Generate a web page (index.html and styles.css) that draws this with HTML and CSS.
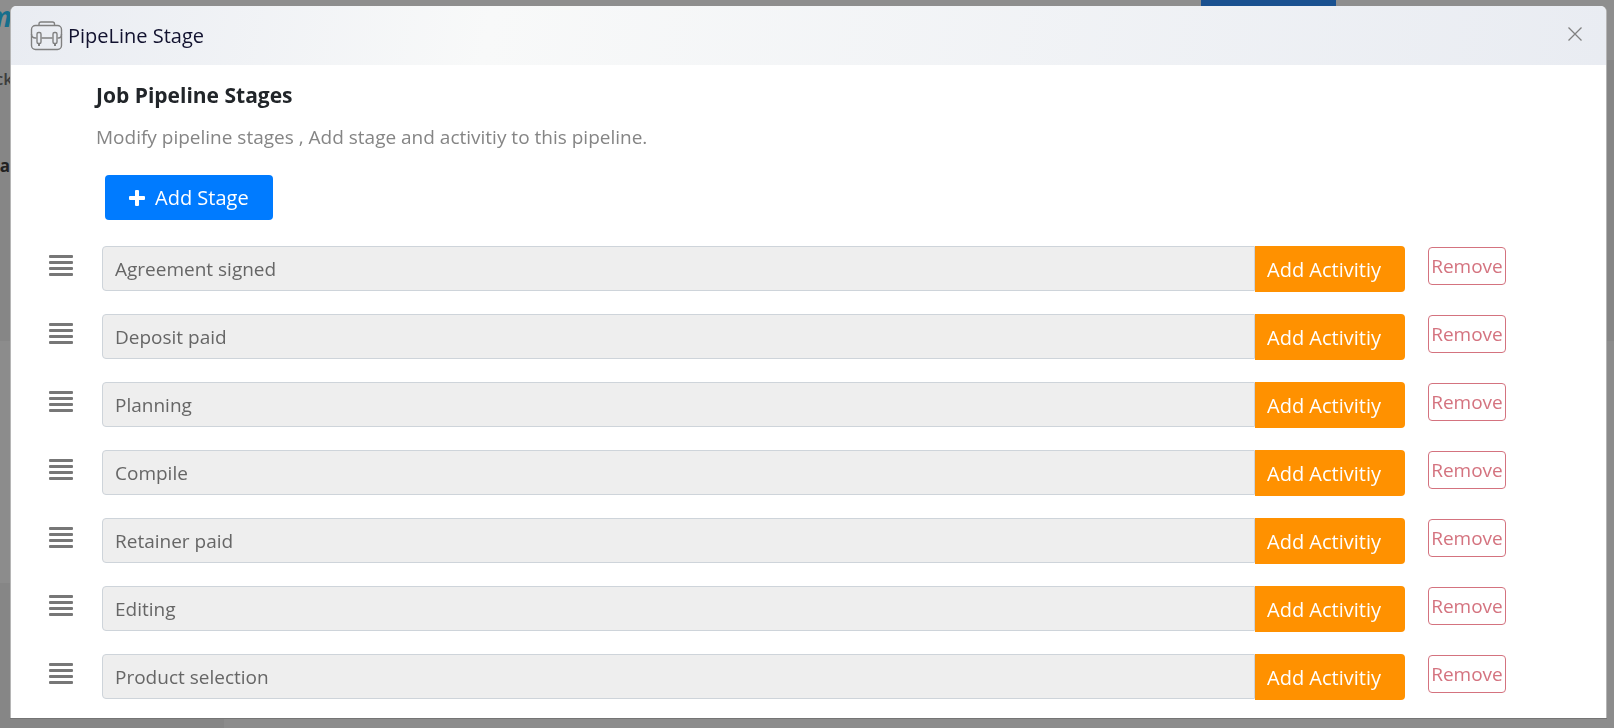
FILE: index.html
```
<!DOCTYPE html>
<html lang="en">
  <head>
    <meta charset="utf-8">
    <title>PipeLine Stage</title>
    <link rel="stylesheet" href="styles.css">
  </head>
  <body>
    <div class="page" aria-hidden="true">
      <div class="page-top"><span class="logo">m</span><span class="page-button"></span></div>
      <div class="page-side">
        <div class="side-head"><span class="side-text">ck</span></div>
        <div class="side-head"><span class="side-text dark">a</span></div>
      </div>
      <div class="page-band"></div>
      <div class="page-foot"></div>
    </div>

    <div class="overlay">
      <div class="modal" role="dialog" aria-labelledby="modal-title">
        <div class="modal-header">
          <svg class="case-icon" width="33" height="30" viewBox="0 0 32 30" fill="none" stroke="#808080" stroke-width="1.4">
            <path d="M8.500 4V3Q8.500 1 10.500 1H22Q24 1 24 3V4"/>
            <rect x="1" y="4.500" width="30" height="24" rx="4"/>
            <path d="M1 13Q1 17 5 17H6M11 17H22M27 17H28Q31 17 31 13"/>
            <rect x="6.500" y="11.500" width="4" height="11" rx="1.500"/>
            <rect x="22.500" y="11.500" width="4" height="11" rx="1.500"/>
            <path d="M8.500 22V25M24.500 22V25" stroke-width="2"/>
          </svg>
          <h1 class="modal-title" id="modal-title">PipeLine Stage</h1>
          <button class="close" type="button" aria-label="Close">
            <svg width="14" height="14" viewBox="0 0 14 14" stroke="#808080" stroke-width="1.300"><path d="M.5.5L13.500 13.500M13.500.5L.5 13.500"/></svg>
          </button>
        </div>
        <div class="modal-body">
          <div class="intro">
            <h2 class="heading">Job Pipeline Stages</h2>
            <p class="hint">Modify pipeline stages , Add stage and activitiy to this pipeline.</p>
            <button class="add-stage" type="button">
              <svg width="16" height="16" viewBox="0 0 16 16" fill="#fff"><path d="M6 1Q6 0 7 0H9Q10 0 10 1V6H15Q16 6 16 7V9Q16 10 15 10H10V15Q10 16 9 16H7Q6 16 6 15V10H1Q0 10 0 9V7Q0 6 1 6H6Z"/></svg>
              Add Stage
            </button>
          </div>
          <ul class="stages">
            <li class="stage">
              <span class="handle"><i></i><i></i><i></i><i></i></span>
              <div class="group">
                <input class="name" type="text" value="Agreement signed" aria-label="Stage 1" readonly>
                <button class="activity" type="button">Add Activitiy</button>
              </div>
              <button class="remove" type="button">Remove</button>
            </li>
            <li class="stage">
              <span class="handle"><i></i><i></i><i></i><i></i></span>
              <div class="group">
                <input class="name" type="text" value="Deposit paid" aria-label="Stage 2" readonly>
                <button class="activity" type="button">Add Activitiy</button>
              </div>
              <button class="remove" type="button">Remove</button>
            </li>
            <li class="stage">
              <span class="handle"><i></i><i></i><i></i><i></i></span>
              <div class="group">
                <input class="name" type="text" value="Planning" aria-label="Stage 3" readonly>
                <button class="activity" type="button">Add Activitiy</button>
              </div>
              <button class="remove" type="button">Remove</button>
            </li>
            <li class="stage">
              <span class="handle"><i></i><i></i><i></i><i></i></span>
              <div class="group">
                <input class="name" type="text" value="Compile" aria-label="Stage 4" readonly>
                <button class="activity" type="button">Add Activitiy</button>
              </div>
              <button class="remove" type="button">Remove</button>
            </li>
            <li class="stage">
              <span class="handle"><i></i><i></i><i></i><i></i></span>
              <div class="group">
                <input class="name" type="text" value="Retainer paid" aria-label="Stage 5" readonly>
                <button class="activity" type="button">Add Activitiy</button>
              </div>
              <button class="remove" type="button">Remove</button>
            </li>
            <li class="stage">
              <span class="handle"><i></i><i></i><i></i><i></i></span>
              <div class="group">
                <input class="name" type="text" value="Editing" aria-label="Stage 6" readonly>
                <button class="activity" type="button">Add Activitiy</button>
              </div>
              <button class="remove" type="button">Remove</button>
            </li>
            <li class="stage">
              <span class="handle"><i></i><i></i><i></i><i></i></span>
              <div class="group">
                <input class="name" type="text" value="Product selection" aria-label="Stage 7" readonly>
                <button class="activity" type="button">Add Activitiy</button>
              </div>
              <button class="remove" type="button">Remove</button>
            </li>
          </ul>
        </div>
      </div>
    </div>
  </body>
</html>
```
FILE: styles.css
```
* { box-sizing: border-box; }

body {
  margin: 0;
  min-height: 100vh;
  background: #8c8c8c;
  font-family: "Open Sans", "Noto Sans", sans-serif;
  color: #212529;
  overflow: hidden;
}

button, input { font-family: inherit; }

/* page behind the dialog */
.page {
  display: flex;
  flex-direction: column;
  height: 100vh;
  background: #8c8c8c;
}

.page-top {
  display: flex;
  justify-content: space-between;
  height: 60px;
  background: #8e8e8e;
}

.logo {
  display: flex;
  justify-content: flex-end;
  width: 12px;
  overflow: hidden;
  color: #166f8c;
  font-size: 28px;
  line-height: 32px;
  font-weight: bold;
  font-style: italic;
}

.page-button {
  width: 135px;
  height: 40px;
  margin-right: 278px;
  background: #1a5190;
}

.page-side {
  height: 281px;
  background: #868686;
}

.side-head {
  height: 87px;
  padding-top: 7px;
}

.side-text {
  display: flex;
  justify-content: flex-end;
  width: 13px;
  overflow: hidden;
  color: #3c3c3c;
  font-size: 17px;
  line-height: 24px;
  font-weight: 600;
}

.side-text.dark {
  width: 10px;
  color: #222;
  font-weight: bold;
}

.page-band { height: 242px; }

.page-foot {
  flex: 1;
  width: 224px;
  background: #868686;
}

/* dialog */
.overlay {
  position: fixed;
  inset: 0;
  padding: 6px 7px 10px 10px;
}

.modal {
  height: 100%;
  border: solid #b5b5b5;
  border-width: 0 1px;
  border-radius: 6px 6px 0 0;
  background: #fff;
  box-shadow: 0 1px 0 #747474;
  overflow: hidden;
}

.modal-header {
  display: flex;
  align-items: center;
  height: 59px;
  padding: 0 24px 0 19px;
  background: linear-gradient(100deg, #e9ecf2 0%, #f8f9f9 30%, #e9ecf2 100%);
}

.modal-title {
  flex: 1;
  margin: 0 0 0 5px;
  color: #12122f;
  font-size: 20px;
  line-height: 28px;
  font-weight: 400;
}

.close {
  display: flex;
  margin-bottom: 4px;
  padding: 0;
  border: 0;
  background: none;
}

.modal-body { padding: 16px 100px 0 38px; }

.intro { padding-left: 47px; }

.heading {
  margin: 0;
  font-size: 21px;
  line-height: 28px;
  font-weight: 700;
}

.hint {
  margin: 14px 0 24px;
  color: #858585;
  font-size: 19px;
  line-height: 28px;
}

.add-stage {
  display: flex;
  align-items: center;
  gap: 10px;
  height: 45px;
  margin-left: 9px;
  padding: 0 24px;
  border: 0;
  border-radius: 4px;
  background: #007bff;
  color: #fff;
  font-size: 20px;
}

.stages {
  display: grid;
  gap: 22px;
  margin: 26px 0 0;
  padding: 0;
  list-style: none;
}

.stage {
  display: flex;
  align-items: flex-start;
}

.handle {
  display: grid;
  gap: 3px;
  width: 24px;
  margin: 9px 29px 0 0;
}

.handle i {
  height: 3px;
  border-radius: 1px;
  background: #777;
}

.group {
  display: flex;
  flex: 1;
}

.name {
  flex: 1;
  min-width: 0;
  height: 45px;
  padding: 1px 12px 0;
  border: 1px solid #ced4da;
  border-radius: 4px 0 0 4px;
  background: #eee;
  color: #666;
  font-size: 19px;
}

.activity {
  width: 150px;
  height: 46px;
  padding: 0 12px;
  border: 0;
  border-radius: 0 4px 4px 0;
  background: #ff9100;
  color: #fff;
  font-size: 20px;
  text-align: left;
}

.remove {
  width: 78px;
  height: 38px;
  margin: 1px 0 0 23px;
  padding: 0;
  border: 1px solid #d4737f;
  border-radius: 4px;
  background: #fff;
  color: #d4737f;
  font-size: 19px;
}
```
